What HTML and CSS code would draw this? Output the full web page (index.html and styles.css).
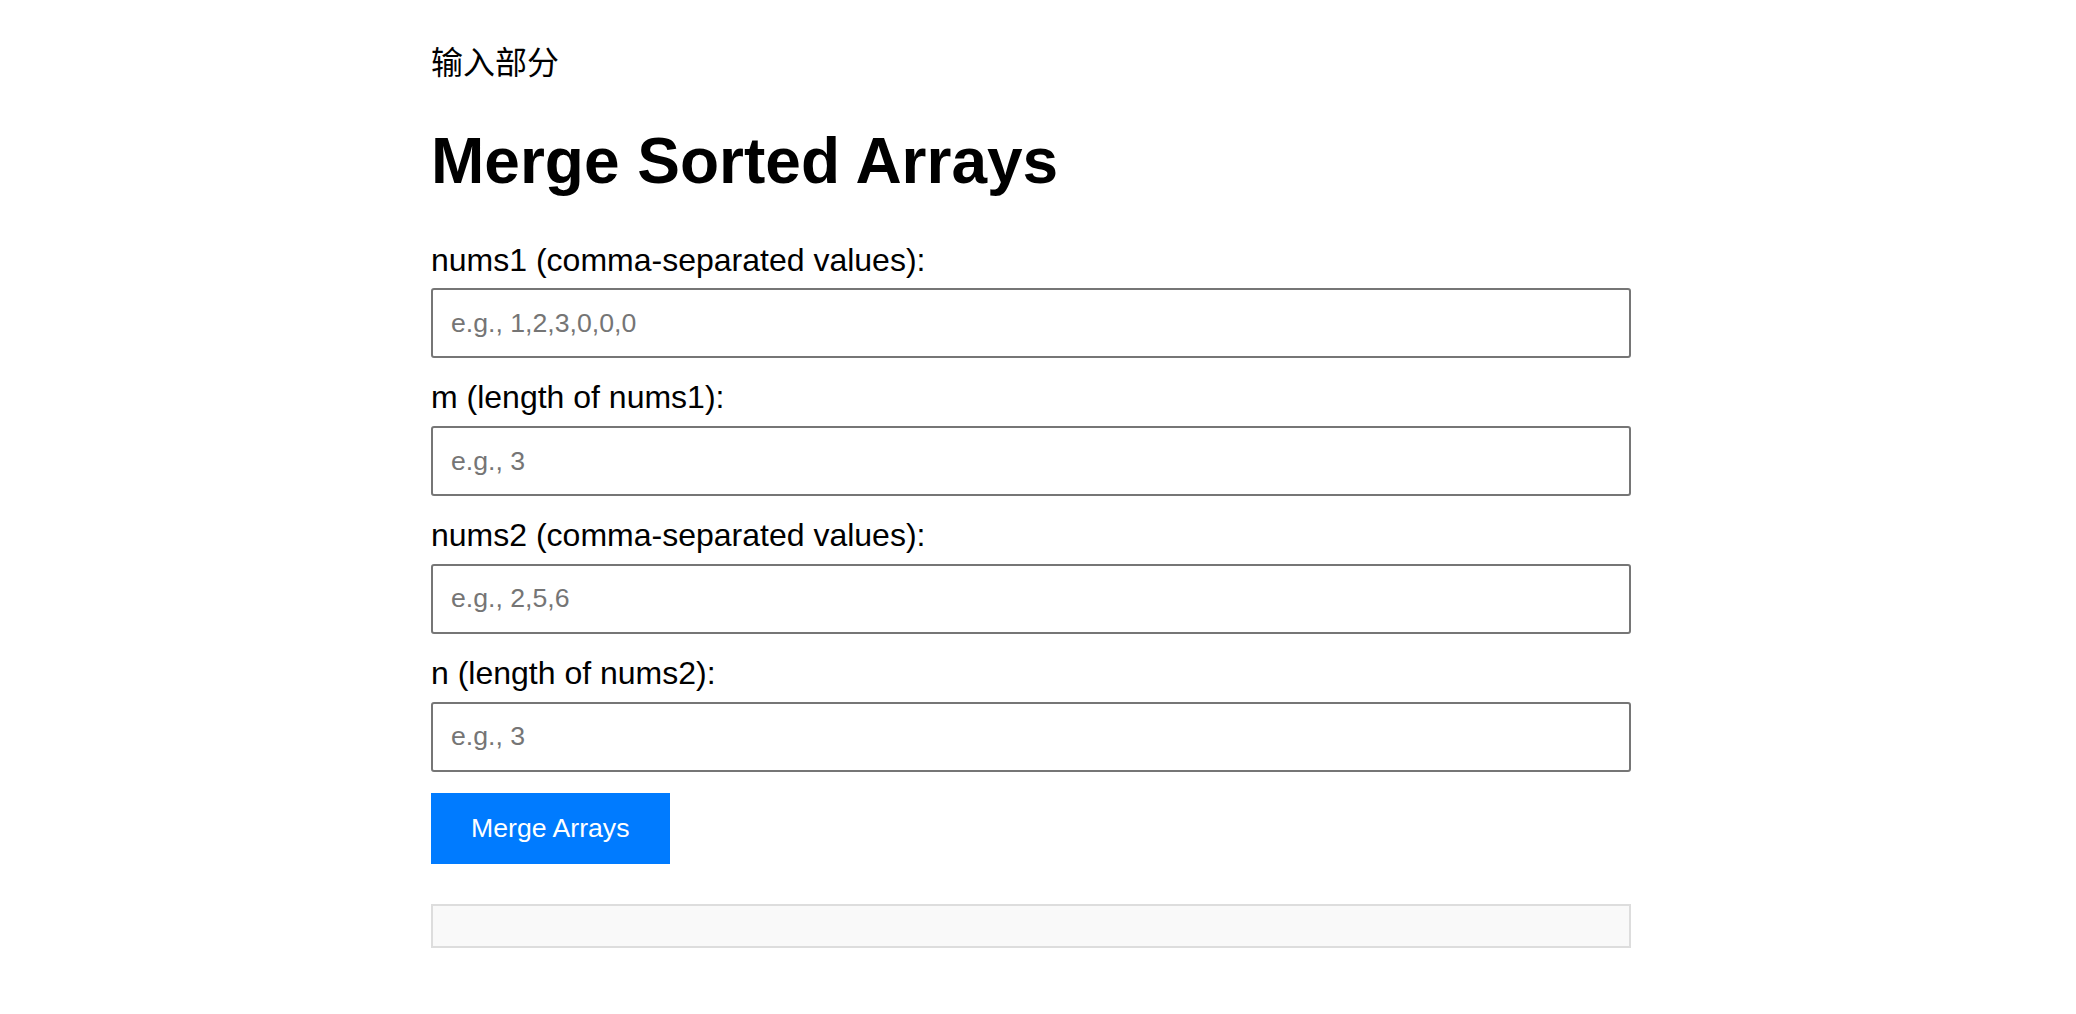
FILE: index.html
```html
<!DOCTYPE html>
<html lang="zh-CN">
<head>
<meta charset="utf-8">
<title>Merge Sorted Arrays</title>
<link rel="stylesheet" href="styles.css">
</head>
<body>
<div class="page">
  <p class="section-title">输入部分</p>
  <h1 class="title">Merge Sorted Arrays</h1>
  <form class="form">
    <div class="form-group">
      <label class="label" for="nums1">nums1 (comma-separated values):</label>
      <input class="input" id="nums1" type="text" placeholder="e.g., 1,2,3,0,0,0">
    </div>
    <div class="form-group">
      <label class="label" for="m">m (length of nums1):</label>
      <input class="input" id="m" type="text" placeholder="e.g., 3">
    </div>
    <div class="form-group">
      <label class="label" for="nums2">nums2 (comma-separated values):</label>
      <input class="input" id="nums2" type="text" placeholder="e.g., 2,5,6">
    </div>
    <div class="form-group">
      <label class="label" for="n">n (length of nums2):</label>
      <input class="input" id="n" type="text" placeholder="e.g., 3">
    </div>
    <button class="btn" type="button">Merge Arrays</button>
  </form>
  <div class="result"></div>
</div>
</body>
</html>
```
FILE: styles.css
```css
html, body {
  margin: 0;
  padding: 0;
  background: #ffffff;
}
body {
  font-family: "Liberation Sans", Arial, "Noto Sans CJK SC", sans-serif;
  color: #000000;
}
.page {
  width: 1200px;
  margin: 0 auto;
  padding: 36px 14px 0 0;
}
.section-title {
  margin: 0;
  font-family: "Noto Sans CJK SC", "Liberation Sans", sans-serif;
  font-size: 32px;
  line-height: 48px;
  font-weight: 400;
}
.title {
  margin: 41px 0 43px;
  font-size: 64px;
  line-height: 1.15;
  font-weight: 700;
}
.form {
  margin: 0;
}
.form-group {
  margin-bottom: 21px;
}
.label {
  display: block;
  font-size: 32px;
  line-height: 1.15;
  margin-bottom: 10px;
}
.input {
  display: block;
  box-sizing: border-box;
  width: 100%;
  height: 70px;
  margin: 0;
  padding: 0 18px;
  border: 2px solid #767676;
  border-radius: 3px;
  font-family: "Liberation Sans", Arial, sans-serif;
  font-size: 26.67px;
  color: #000;
  background: #fff;
}
.input::placeholder {
  color: #757575;
}
.btn {
  display: block;
  margin: 0;
  padding: 20px 40px;
  border: none;
  border-radius: 0;
  background: #007bff;
  color: #ffffff;
  font-family: "Liberation Sans", Arial, sans-serif;
  font-size: 26.67px;
  line-height: 31px;
  cursor: pointer;
}
.result {
  margin-top: 40px;
  padding: 20px;
  border: 2px solid #dddddd;
  background: #f9f9f9;
}
```
